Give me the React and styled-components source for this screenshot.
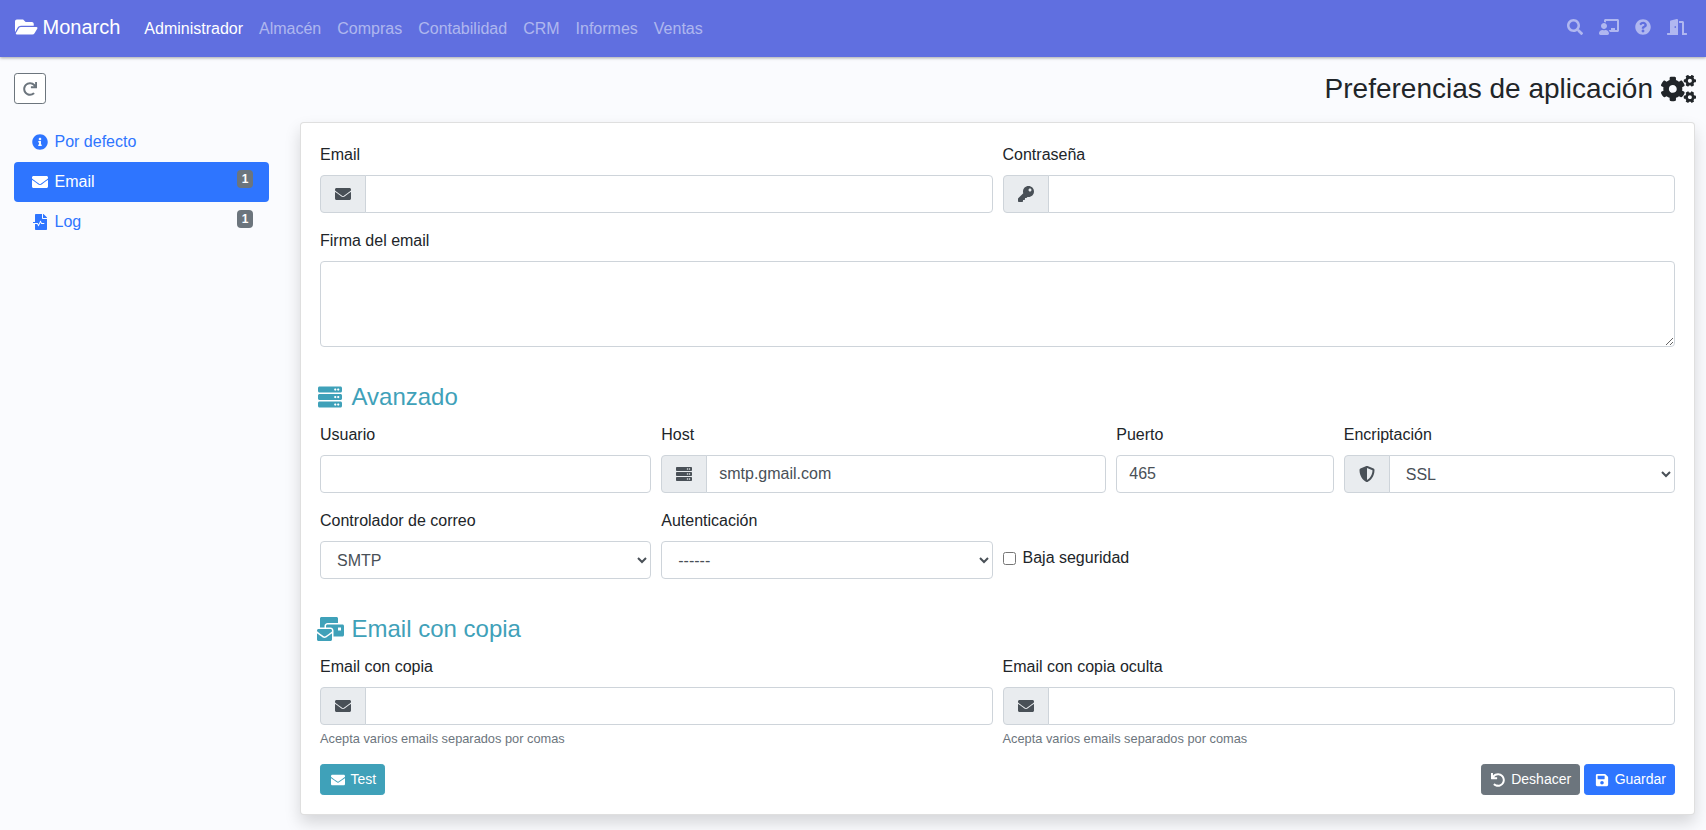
import React from 'react';
import styled, { createGlobalStyle } from 'styled-components';
import {
  FaFolderOpen, FaSearch, FaChalkboardTeacher, FaQuestionCircle, FaDoorOpen, FaRedo, FaCogs,
  FaInfoCircle, FaEnvelope, FaFileMedicalAlt, FaKey, FaServer, FaShieldAlt, FaMailBulk, FaUndo, FaSave,
} from 'react-icons/fa';

const Global = createGlobalStyle`
  * { box-sizing: border-box; }
  html, body { margin: 0; padding: 0; }
  body {
    background: #fafbfe;
    color: #212529;
    font: 400 16px/1.5 "Liberation Sans", Arial, sans-serif;
    min-height: 830px;
    overflow: hidden;
  }
`;

const Glyph = styled(({ icon: Icon, ...rest }) => <Icon {...rest} />)`
  flex: none;
  width: ${(p) => p.size * (p.$ratio || 1)}px;
  height: ${(p) => p.size}px;
`;

const Navbar = styled.nav`
  height: 57px;
  background: #606fe0;
  display: flex;
  align-items: center;
  padding: 0 11px 0 15px;
  box-shadow: 0 1px 3px rgba(0, 0, 0, 0.35);
`;
const Brand = styled.a`
  display: inline-flex;
  align-items: center;
  gap: 5px;
  color: #fff;
  font-size: 20px;
  margin: -3px 16px 0 0;
`;
const NavLink = styled.a`
  padding: 8px;
  display: inline-flex;
  align-items: center;
  color: ${(p) => (p.$active ? '#fff' : 'rgba(255,255,255,.5)')};
`;
const NavGroup = styled.div`
  display: flex;
  align-items: center;
  margin-left: ${(p) => (p.$end ? 'auto' : '0')};
  margin-top: ${(p) => (p.$end ? '-4px' : '0')};
`;

const Head = styled.header`
  display: flex;
  align-items: center;
  justify-content: space-between;
  height: 65px;
  padding: 0 10px 2px 14px;
`;
const RefreshButton = styled.button`
  width: 32px;
  height: 31px;
  padding: 0;
  display: flex;
  align-items: center;
  justify-content: center;
  background: #fff;
  border: 1px solid #6c757d;
  border-radius: 3.2px;
  color: #6c757d;
  font-size: 14px;
`;
const Title = styled.h3`
  margin: 0;
  font-size: 28px;
  font-weight: 400;
  line-height: 1.2;
  display: flex;
  align-items: center;
  gap: 8px;
`;

const Main = styled.main`
  display: flex;
  align-items: flex-start;
  padding: 0 11px 0 14px;
  gap: 31px;
`;
const Side = styled.aside`
  width: 255px;
  flex: none;
  display: flex;
  flex-direction: column;
`;
const Pill = styled.a`
  height: 40px;
  padding: 8px 16px;
  display: flex;
  align-items: center;
  gap: 4.5px;
  border-radius: 4px;
  color: ${(p) => (p.$active ? '#fff' : '#2e75ff')};
  background: ${(p) => (p.$active ? '#2e75ff' : 'transparent')};
`;
const Badge = styled.span`
  margin-left: auto;
  align-self: flex-start;
  height: 18px;
  width: 16px;
  border-radius: 4px;
  background: #6c757d;
  color: #fff;
  font-size: 12px;
  font-weight: 700;
  line-height: 18px;
  text-align: center;
`;
const FixedIcon = styled.span`
  width: 1.25em;
  flex: none;
  display: inline-flex;
  align-items: center;
  justify-content: center;
`;

const Card = styled.section`
  flex: 1;
  height: 693px;
  background: #fff;
  border: 1px solid rgba(0, 0, 0, 0.125);
  border-radius: 4px;
  padding: 20px 19px 19px;
  box-shadow: 0 8px 16px rgba(0, 0, 0, 0.15);
`;
const Row = styled.div`
  display: grid;
  grid-template-columns: repeat(12, 1fr);
  column-gap: 10px;
`;
const Group = styled.div`
  grid-column: span ${(p) => p.$span || 12};
  margin-bottom: 16px;
`;
const Label = styled.label`
  display: block;
  margin-bottom: 8px;
`;
const Input = styled.input`
  display: block;
  flex: 1;
  min-width: 0;
  width: 100%;
  height: 38px;
  padding: 6px 12px;
  font: inherit;
  color: #495057;
  background: #fff;
  border: 1px solid #ced4da;
  border-radius: ${(p) => (p.$joined ? '0 4px 4px 0' : '4px')};
  margin-left: ${(p) => (p.$joined ? '-1px' : '0')};
`;
const Select = styled.select`
  display: block;
  flex: 1;
  min-width: 0;
  width: 100%;
  height: 38px;
  padding: 6px 12px;
  font: inherit;
  color: #495057;
  background: #fff;
  border: 1px solid #ced4da;
  border-radius: ${(p) => (p.$joined ? '0 4px 4px 0' : '4px')};
  margin-left: ${(p) => (p.$joined ? '-1px' : '0')};
`;
const Textarea = styled.textarea`
  display: block;
  width: 100%;
  height: 86px;
  padding: 6px 12px;
  font: inherit;
  color: #495057;
  background: #fff;
  border: 1px solid #ced4da;
  border-radius: 4px;
`;
const InputGroup = styled.div`
  display: flex;
  height: 38px;
`;
const Addon = styled.span`
  display: flex;
  align-items: center;
  padding: 0 12px;
  background: #e9ecef;
  border: 1px solid #ced4da;
  border-radius: 4px 0 0 4px;
  color: #495057;
`;
const Section = styled.h4`
  margin: 19px 0 12px -5px;
  font-size: 24px;
  font-weight: 400;
  line-height: 29px;
  color: #3fa1b9;
  display: flex;
  align-items: center;
  gap: 6.5px;
`;
const Help = styled.small`
  display: block;
  margin-top: 4px;
  font-size: 12.8px;
  line-height: 19px;
  color: #6c757d;
`;
const CheckCell = styled.label`
  grid-column: span 6;
  display: flex;
  align-items: center;
  gap: 7px;
  height: 24px;
  margin-top: 37px;
`;
const Check = styled.input`
  width: 13px;
  height: 13px;
  margin: 0;
`;
const Actions = styled.div`
  display: flex;
  align-items: center;
  gap: 4px;
`;
const Button = styled.button`
  height: 31px;
  padding: 0 8px;
  border: 1px solid ${(p) => p.$color};
  border-radius: 3.2px;
  background: ${(p) => p.$color};
  color: #fff;
  font: 400 14px/1.5 "Liberation Sans", Arial, sans-serif;
  display: inline-flex;
  align-items: center;
  gap: 4px;
  margin-right: ${(p) => (p.$push ? 'auto' : '0')};
`;

function EmailField({ label, help }) {
  return (
    <Group $span={6}>
      <Label>{label}</Label>
      <InputGroup>
        <Addon><FixedIcon><Glyph icon={FaEnvelope} size={16} /></FixedIcon></Addon>
        <Input $joined />
      </InputGroup>
      {help && <Help>{help}</Help>}
    </Group>
  );
}

export default function App() {
  return (
    <>
      <Global />
      <Navbar>
        <Brand><Glyph icon={FaFolderOpen} size={20} $ratio={1.125} />Monarch</Brand>
        <NavGroup>
          <NavLink $active>Administrador</NavLink>
          {['Almacén', 'Compras', 'Contabilidad', 'CRM', 'Informes', 'Ventas'].map((t) => (
            <NavLink key={t}>{t}</NavLink>
          ))}
        </NavGroup>
        <NavGroup $end>
          <NavLink><Glyph icon={FaSearch} size={16} /></NavLink>
          <NavLink><Glyph icon={FaChalkboardTeacher} size={16} $ratio={1.25} /></NavLink>
          <NavLink><Glyph icon={FaQuestionCircle} size={16} /></NavLink>
          <NavLink><Glyph icon={FaDoorOpen} size={16} $ratio={1.25} /></NavLink>
        </NavGroup>
      </Navbar>
      <Head>
        <RefreshButton aria-label="Recargar"><Glyph icon={FaRedo} size={14} /></RefreshButton>
        <Title>Preferencias de aplicación <Glyph icon={FaCogs} size={28} $ratio={1.25} /></Title>
      </Head>
      <Main>
        <Side>
          <Pill><FixedIcon><Glyph icon={FaInfoCircle} size={16} /></FixedIcon>Por defecto</Pill>
          <Pill $active><FixedIcon><Glyph icon={FaEnvelope} size={16} /></FixedIcon>Email<Badge>1</Badge></Pill>
          <Pill><FixedIcon><Glyph icon={FaFileMedicalAlt} size={16} /></FixedIcon>Log<Badge>1</Badge></Pill>
        </Side>
        <Card>
          <Row>
            <EmailField label="Email" />
            <Group $span={6}>
              <Label>Contraseña</Label>
              <InputGroup>
                <Addon><FixedIcon><Glyph icon={FaKey} size={16} /></FixedIcon></Addon>
                <Input $joined type="password" />
              </InputGroup>
            </Group>
            <Group>
              <Label>Firma del email</Label>
              <Textarea />
            </Group>
          </Row>
          <Section><FixedIcon><Glyph icon={FaServer} size={24} /></FixedIcon>Avanzado</Section>
          <Row>
            <Group $span={3}>
              <Label>Usuario</Label>
              <Input />
            </Group>
            <Group $span={4}>
              <Label>Host</Label>
              <InputGroup>
                <Addon><FixedIcon><Glyph icon={FaServer} size={16} /></FixedIcon></Addon>
                <Input $joined defaultValue="smtp.gmail.com" />
              </InputGroup>
            </Group>
            <Group $span={2}>
              <Label>Puerto</Label>
              <Input defaultValue="465" />
            </Group>
            <Group $span={3}>
              <Label>Encriptación</Label>
              <InputGroup>
                <Addon><FixedIcon><Glyph icon={FaShieldAlt} size={16} /></FixedIcon></Addon>
                <Select $joined defaultValue="SSL"><option>SSL</option><option>TLS</option></Select>
              </InputGroup>
            </Group>
            <Group $span={3}>
              <Label>Controlador de correo</Label>
              <Select defaultValue="SMTP"><option>SMTP</option></Select>
            </Group>
            <Group $span={3}>
              <Label>Autenticación</Label>
              <Select><option>------</option></Select>
            </Group>
            <CheckCell><Check type="checkbox" />Baja seguridad</CheckCell>
          </Row>
          <Section><FixedIcon><Glyph icon={FaMailBulk} size={24} $ratio={1.125} /></FixedIcon>Email con copia</Section>
          <Row>
            <EmailField label="Email con copia" help="Acepta varios emails separados por comas" />
            <EmailField label="Email con copia oculta" help="Acepta varios emails separados por comas" />
          </Row>
          <Actions>
            <Button $color="#3fa1b9" $push><FixedIcon><Glyph icon={FaEnvelope} size={14} /></FixedIcon>Test</Button>
            <Button $color="#6c757d"><FixedIcon><Glyph icon={FaUndo} size={14} /></FixedIcon>Deshacer</Button>
            <Button $color="#2e75ff"><FixedIcon><Glyph icon={FaSave} size={14} /></FixedIcon>Guardar</Button>
          </Actions>
        </Card>
      </Main>
    </>
  );
}
